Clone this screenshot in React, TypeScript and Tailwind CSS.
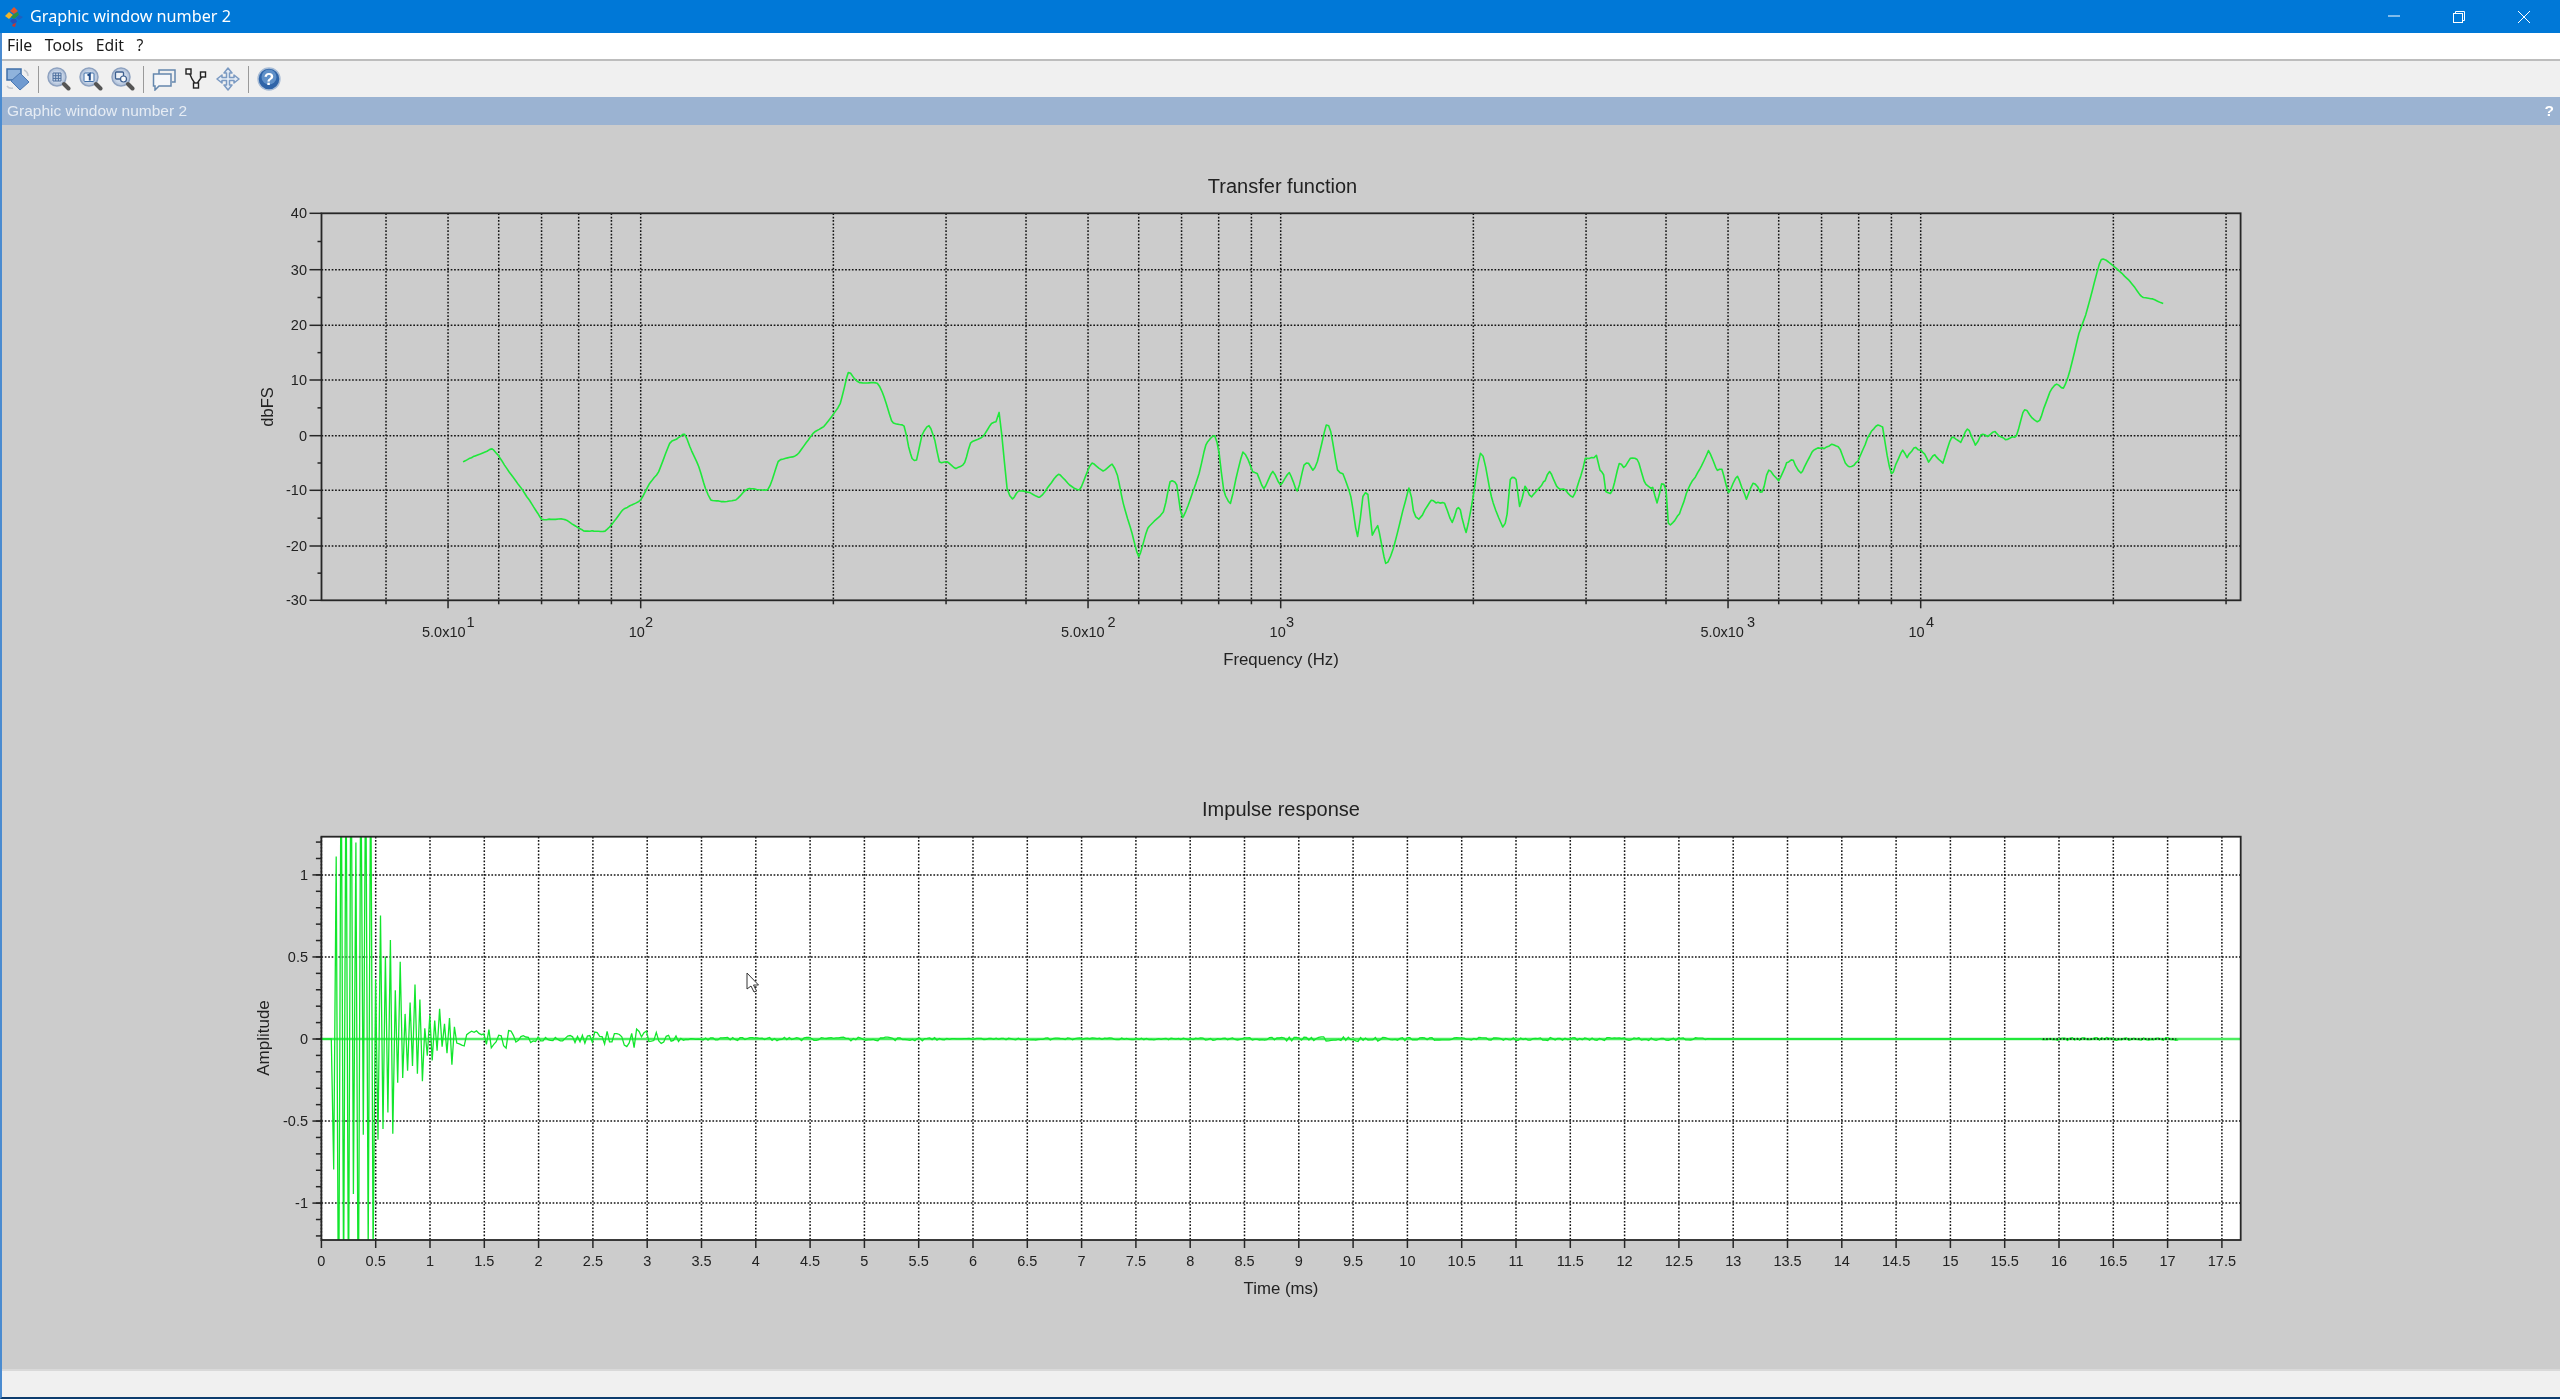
import React from "react";

const logX = (f: number) => 640.7 + 640 * (Math.log10(f) - 2);
const timeX = (t: number) => 321.4 + 108.6 * t;

const PLOT1 = { left: 321.5, right: 2240.6, top: 213.3, bottom: 600.3 };
const PLOT2 = { left: 321.4, right: 2240.7, top: 836.7, bottom: 1240 };

const dbTicks = [
  { label: "40", y: 213.3 },
  { label: "30", y: 269.7 },
  { label: "20", y: 325.3 },
  { label: "10", y: 380 },
  { label: "0", y: 435.7 },
  { label: "-10", y: 490.3 },
  { label: "-20", y: 546 },
  { label: "-30", y: 600.3 },
];

const freqGrid: number[] = [];
for (let dec = 10; dec <= 10000; dec *= 10) {
  for (let m = 1; m <= 9; m++) {
    const f = dec * m;
    if (f >= 40 && f <= 30000) freqGrid.push(f);
  }
}
const longFreq = [50, 100, 500, 1000, 5000, 10000];

const freqLabels = [
  { base: "5.0x10", exp: "1", x: 422, ex: 466.5 },
  { base: "10", exp: "2", x: 628.7, ex: 645 },
  { base: "5.0x10", exp: "2", x: 1061, ex: 1107.6 },
  { base: "10", exp: "3", x: 1269.6, ex: 1286 },
  { base: "5.0x10", exp: "3", x: 1700.4, ex: 1747 },
  { base: "10", exp: "4", x: 1908.5, ex: 1926 },
];

// traced from the reference, x/y as read on three crops of the plot
const seg1 = [522,906,545,890,570,877,587,867,600,885,625,935,655,990,680,1040,698,1077,715,1078,750,1078,770,1095,792,1112,815,1113,840,1113,860,1085,880,1050,900,1035,920,1020,940,970,960,935,985,850,1000,838,1018,822,1030,860,1050,920,1065,985,1077,1020,1090,1022,1105,1025,1133,1020,1160,986,1205,988,1228,905,1245,895,1270,885,1295,840,1310,815,1330,800,1350,765,1367,730,1385,637,1395,650,1410,668,1450,670,1465,710,1482,782,1495,793,1510,798,1520,860,1528,895,1538,900,1550,825];
const seg2 = [65,797,78,840,88,905,105,905,125,925,145,908,158,850,185,830,205,790,215,785,222,757,228,825,240,985,252,1017,265,993,290,998,313,1012,330,985,355,943,380,975,402,990,415,950,430,910,455,933,475,913,487,945,500,1030,520,1120,535,1190,555,1105,590,1055,605,965,620,975,633,1073,670,940,685,855,705,827,715,880,725,990,740,1030,752,960,768,877,780,900,790,935,800,940,815,985,835,935,852,975,872,938,890,993,905,915,915,910,925,930,935,905,955,795,965,815,980,930,992,942,1010,1010,1025,1130,1037,1010,1048,1003,1058,1125,1070,1097,1088,1210,1105,1165,1140,987,1150,1050,1162,1080,1190,1020,1205,1030,1220,1032,1237,1090,1247,1045,1255,1050,1268,1115,1285,1000,1300,877,1312,920,1325,1010,1350,1100,1360,1060,1367,960,1380,960,1388,1042,1400,978,1415,1010,1445,960,1455,935,1475,985,1490,990,1507,1012,1525,950,1535,898,1548,895,1560,888];
const seg3 = [105,890,112,930,120,945,125,995,140,993,155,908,165,922,180,895,195,897,215,975,230,985,240,1028,250,970,260,990,265,1088,275,1090,290,1060,310,985,335,930,355,875,375,930,385,930,400,995,420,948,440,1015,455,968,475,997,490,930,512,960,530,910,545,903,562,937,590,870,610,865,635,852,650,870,667,920,690,902,715,825,730,797,745,800,752,860,765,940,790,870,800,890,815,865,835,875,848,905,862,885,880,908,900,830,920,848,935,805,953,853,965,825,980,828,997,817,1020,837,1045,825,1063,748,1080,775,1097,780,1120,695,1135,672,1150,685,1165,630,1185,520,1200,465,1215,390,1235,298,1262,318,1300,365,1325,410,1350,417,1377,433];

function makeRandom(start: number) {
  let seed = start;
  return () => {
    seed = (seed * 16807) % 2147483647;
    return seed / 2147483647;
  };
}

function toPage(pts: number[], ox: number) {
  const out: number[][] = [];
  for (let i = 0; i < pts.length; i += 2) out.push([ox + pts[i] / 2.24, 160 + pts[i + 1] / 3]);
  return out;
}

// rounds the traced points off and adds the fine ripple of the measured curve
function buildTransfer() {
  const pts = [...toPage(seg1, 230), ...toPage(seg2, 900), ...toPage(seg3, 1550)];
  const rnd = makeRandom(11);
  const out: string[] = [];
  for (let i = 0; i < pts.length - 1; i++) {
    const p0 = pts[Math.max(i - 1, 0)];
    const p1 = pts[i];
    const p2 = pts[i + 1];
    const p3 = pts[Math.min(i + 2, pts.length - 1)];
    const n = Math.max(1, Math.round((p2[0] - p1[0]) / 2.2));
    for (let k = 0; k < n; k++) {
      const u = k / n;
      const tension = 0.3;
      const h = (a: number, b: number, c: number, d: number) => {
        const m1 = (c - a) * tension;
        const m2 = (d - b) * tension;
        return (2 * u ** 3 - 3 * u ** 2 + 1) * b + (u ** 3 - 2 * u ** 2 + u) * m1 + (-2 * u ** 3 + 3 * u ** 2) * c + (u ** 3 - u ** 2) * m2;
      };
      const x = h(p0[0], p1[0], p2[0], p3[0]);
      const ripple = x > 1400 && x < 2050 ? (rnd() - 0.5) * 2.2 : (rnd() - 0.5) * 0.5;
      out.push(`${x.toFixed(1)},${(h(p0[1], p1[1], p2[1], p3[1]) + ripple).toFixed(1)}`);
    }
  }
  return out.join(" ");
}
const transferCurve = buildTransfer();

// envelope of the impulse response, [ms, amplitude]
const envelope = [
  [0, 0], [0.1, 0], [0.105, 0.7], [0.13, 2.4], [0.42, 2.4], [0.5, 1.2], [0.55, 0.75], [0.72, 0.55], [0.85, 0.36],
  [1.0, 0.22], [1.2, 0.17], [1.25, 0.07], [1.7, 0.06], [2.0, 0.012], [2.2, 0.012], [2.4, 0.035], [2.9, 0.065],
  [3.3, 0.015], [3.4, 0.003], [3.6, 0.009], [4.6, 0.012], [5.6, 0.012], [5.8, 0.002], [6.3, 0.007], [7.2, 0.007],
  [7.6, 0.005], [8.4, 0.008], [9.4, 0.016], [10.2, 0.009], [11, 0.01], [12.7, 0.008], [12.8, 0], [15.8, 0],
  [15.9, 0.008], [17.1, 0.009], [17.11, 0],
];

function envAt(t: number) {
  for (let i = 1; i < envelope.length; i++) {
    const [t0, a0] = envelope[i - 1];
    const [t1, a1] = envelope[i];
    if (t <= t1) return a0 + ((a1 - a0) * (t - t0)) / (t1 - t0);
  }
  return 0;
}

function buildImpulse() {
  const rnd = makeRandom(7);
  const out: string[] = [];
  const step = 1 / 44.1;
  for (let i = 0; i * step < 17.11; i++) {
    const t = i * step;
    // alternating at the start, the tail is more like noise
    const sign = t < 1.25 ? (i % 2 === 0 ? 1 : -1) : rnd() > 0.5 ? 1 : -1;
    const r = rnd();
    const a = envAt(t) * (0.2 + 0.8 * r) * sign;
    out.push(`${timeX(t).toFixed(1)},${(1039 - a * 164).toFixed(1)}`);
  }
  return out.join(" ");
}
const impulseCurve = buildImpulse();

const ampMajor = [
  { label: "1", v: 1 },
  { label: "0.5", v: 0.5 },
  { label: "0", v: 0 },
  { label: "-0.5", v: -0.5 },
  { label: "-1", v: -1 },
];
const ampMinor: number[] = [];
for (let i = -12; i <= 12; i++) ampMinor.push(i / 10);
const ampY = (v: number) => 1039 - v * 164.1;

const timeTicks: number[] = [];
for (let i = 0; i <= 35; i++) timeTicks.push(i / 2);

const GRID = "#141414";
const AXIS = "#262626";

function Dots({ x1, y1, x2, y2 }: { x1: number; y1: number; x2: number; y2: number }) {
  return <line x1={x1} y1={y1} x2={x2} y2={y2} stroke={GRID} strokeWidth={1.5} strokeDasharray="1.7 1.7" />;
}

function TransferPlot() {
  const p = PLOT1;
  return (
    <svg viewBox="0 125 2560 575" className="block w-full h-[575px] font-['Liberation_Sans',Arial,sans-serif]" fill="#222">
      <text x={1282.5} y={193} fontSize={20} textAnchor="middle">Transfer function</text>
      {dbTicks.slice(1, -1).map((t) => (
        <Dots key={t.label} x1={p.left} y1={t.y} x2={p.right} y2={t.y} />
      ))}
      {freqGrid.map((f) => (
        <Dots key={f} x1={logX(f)} y1={p.top} x2={logX(f)} y2={p.bottom} />
      ))}
      <polyline points={transferCurve} fill="none" stroke="#1fe83a" strokeWidth={1.6} strokeLinejoin="round" />
      <rect x={p.left} y={p.top} width={p.right - p.left} height={p.bottom - p.top} fill="none" stroke={AXIS} strokeWidth={1.8} />
      {dbTicks.map((t) => (
        <g key={t.label}>
          <line x1={p.left - 12} y1={t.y} x2={p.left} y2={t.y} stroke={AXIS} strokeWidth={1.5} />
          <text x={307} y={t.y + 5} fontSize={14.5} textAnchor="end">{t.label}</text>
        </g>
      ))}
      {dbTicks.slice(0, -1).map((t, i) => {
        const y = (t.y + dbTicks[i + 1].y) / 2;
        return <line key={t.label} x1={p.left - 4} y1={y} x2={p.left} y2={y} stroke={AXIS} strokeWidth={1.5} />;
      })}
      {freqGrid.map((f) => (
        <line key={f} x1={logX(f)} y1={p.bottom} x2={logX(f)} y2={p.bottom + (longFreq.includes(f) ? 8 : 4)} stroke={AXIS} strokeWidth={1.5} />
      ))}
      {freqLabels.map((l) => (
        <g key={l.base + l.exp}>
          <text x={l.x} y={636.7} fontSize={14.5}>{l.base}</text>
          <text x={l.ex} y={626.7} fontSize={14.5}>{l.exp}</text>
        </g>
      ))}
      <text x={1281} y={665} fontSize={16.8} textAnchor="middle">Frequency (Hz)</text>
      <text transform="translate(272.5 407) rotate(-90)" fontSize={16.5} textAnchor="middle">dbFS</text>
    </svg>
  );
}

function ImpulsePlot() {
  const p = PLOT2;
  return (
    <svg viewBox="0 700 2560 669" className="block w-full h-[669px] font-['Liberation_Sans',Arial,sans-serif]" fill="#222">
      <defs>
        <clipPath id="impulse-clip">
          <rect x={p.left} y={p.top} width={p.right - p.left} height={p.bottom - p.top} />
        </clipPath>
      </defs>
      <text x={1281} y={816} fontSize={20} textAnchor="middle">Impulse response</text>
      <rect x={p.left} y={p.top} width={p.right - p.left} height={p.bottom - p.top} fill="#ffffff" />
      {ampMajor.map((t) => (
        <Dots key={t.label} x1={p.left} y1={ampY(t.v)} x2={p.right} y2={ampY(t.v)} />
      ))}
      {timeTicks.map((t) => (
        <Dots key={t} x1={timeX(t)} y1={p.top} x2={timeX(t)} y2={p.bottom} />
      ))}
      <line x1={p.left} y1={1039} x2={p.right} y2={1039} stroke="#4cee60" strokeWidth={2.4} />
      <polyline points={impulseCurve} fill="none" stroke="#12e62c" strokeWidth={1.3} clipPath="url(#impulse-clip)" />
      <Dots x1={timeX(15.85)} y1={1039} x2={timeX(17.08)} y2={1039} />
      <rect x={p.left} y={p.top} width={p.right - p.left} height={p.bottom - p.top} fill="none" stroke={AXIS} strokeWidth={1.8} />
      {ampMinor.map((v) => (
        <line key={v} x1={p.left - 5.5} y1={ampY(v)} x2={p.left} y2={ampY(v)} stroke={AXIS} strokeWidth={1.5} />
      ))}
      {ampMajor.map((t) => (
        <g key={t.label}>
          <line x1={p.left - 9} y1={ampY(t.v)} x2={p.left} y2={ampY(t.v)} stroke={AXIS} strokeWidth={1.5} />
          <text x={308} y={ampY(t.v) + 5} fontSize={14.5} textAnchor="end">{t.label}</text>
        </g>
      ))}
      {timeTicks.map((t) => (
        <g key={t}>
          <line x1={timeX(t)} y1={p.bottom} x2={timeX(t)} y2={p.bottom + 8} stroke={AXIS} strokeWidth={1.5} />
          <text x={timeX(t)} y={1266} fontSize={14.5} textAnchor="middle">{t}</text>
        </g>
      ))}
      <text x={1281} y={1294} fontSize={16.8} textAnchor="middle">Time (ms)</text>
      <text transform="translate(269 1038) rotate(-90)" fontSize={17} textAnchor="middle">Amplitude</text>
      <path d="M747 973 L747 989 L751 986 L754 992 L756.5 991 L753.5 985 L758.5 985 Z" fill="#fff" stroke="#333" strokeWidth={1} />
    </svg>
  );
}

function Logo() {
  return (
    <svg width="18" height="22" viewBox="0 0 18 22">
      <path d="M9 1 L13 5 L9 8 L5 5 Z" fill="#e2572b" />
      <path d="M4 6 L8 9 L4 13 L0 10 Z" fill="#f0b429" />
      <path d="M9 8 L13 6 L14 9 L9 13 L6 11 Z" fill="#2f8f3f" />
      <path d="M14 9 L18 11 L14 14 L11 12 Z" fill="#1f5fbf" />
      <path d="M7 13 L11 13 L12 16 L8 18 L5 15 Z" fill="#2450b8" />
      <path d="M8 18 L11 17 L10 21 L7 20 Z" fill="#c7352f" />
    </svg>
  );
}

function Zoomer({ children }: { children: React.ReactNode }) {
  return (
    <svg width="24" height="24" viewBox="0 0 24 24">
      <circle cx="10" cy="10" r="9" fill="#b9c8de" stroke="#8ea2c0" strokeWidth="1.5" />
      <circle cx="10" cy="10" r="6.5" fill="#c9d6e8" />
      <line x1="17" y1="17" x2="21.5" y2="21.5" stroke="#555" strokeWidth="4" strokeLinecap="round" />
      {children}
    </svg>
  );
}

function Separator() {
  return <div className="w-px h-[27px] bg-[#9a9a9a]" />;
}

function Toolbar() {
  return (
    <div className="flex items-center gap-2 h-[36px] pl-[4px] bg-[#f0f0f0]">
      <svg width="24" height="24" viewBox="0 0 24 24">
        <path d="M1 2 H15 V13 H1 Z" fill="#8fb3dc" stroke="#3f6fa8" strokeWidth="1.5" />
        <path d="M1 19 Q3 22 7 21" fill="none" stroke="#c3c8cf" strokeWidth="1.5" />
        <path d="M18 3 Q22 5 22 9" fill="none" stroke="#c3c8cf" strokeWidth="1.5" />
        <path d="M14 6 L23 15 L14 23 L5 14 Z" fill="#6f9ad0" stroke="#4b78b2" strokeWidth="1" />
      </svg>
      <Separator />
      <Zoomer>
        <path d="M6 6 H14 V14 H6 Z M6 8.7 H14 M6 11.4 H14 M8.7 6 V14 M11.4 6 V14" fill="none" stroke="#4d6f9e" strokeWidth="1" />
      </Zoomer>
      <Zoomer>
        <rect x="5" y="6" width="10" height="8.5" rx="1" fill="#f5f8fc" stroke="#3f6fa8" strokeWidth="1" />
        <path d="M8.5 8.5 L10.8 7 V13.5" fill="none" stroke="#27508a" strokeWidth="2" />
      </Zoomer>
      <Zoomer>
        <rect x="4.5" y="5" width="8" height="7" rx="1" fill="#eef2f8" stroke="#3d5f8f" strokeWidth="1.3" />
        <circle cx="12.5" cy="12" r="3" fill="#f8fafc" stroke="#3d5f8f" strokeWidth="1.2" />
      </Zoomer>
      <Separator />
      <svg width="24" height="24" viewBox="0 0 24 24" fill="none" stroke="#6487ad" strokeWidth="1.5">
        <path d="M7 7 V3 H23 V15 H20" />
        <path d="M2.5 7 H19 V19 H7 L3 23 V19 H1.5 V7 Z" fill="#f4f6f9" />
      </svg>
      <svg width="24" height="24" viewBox="0 0 24 24" fill="none" stroke="#222" strokeWidth="1.4">
        <path d="M5 5 L8 12 L12 18 L19 8" />
        <rect x="2" y="2" width="5" height="5" fill="#f6f6f6" />
        <rect x="9.5" y="16" width="5" height="5" fill="#f6f6f6" />
        <rect x="16.5" y="5" width="5" height="5" fill="#f6f6f6" />
      </svg>
      <svg width="24" height="24" viewBox="0 0 24 24" fill="#e3ebf5" stroke="#7b9ac2" strokeWidth="1.5" strokeLinejoin="round">
        <path d="M12 1 L16 6 H13.5 V10.5 H18 V8 L23 12 L18 16 V13.5 H13.5 V18 H16 L12 23 L8 18 H10.5 V13.5 H6 V16 L1 12 L6 8 V10.5 H10.5 V6 H8 Z" />
      </svg>
      <Separator />
      <svg width="24" height="24" viewBox="0 0 24 24">
        <circle cx="12" cy="12" r="11" fill="#2f64a8" stroke="#a9bdd6" strokeWidth="1.4" />
        <circle cx="12" cy="10" r="7.5" fill="#5f90c8" />
        <text x="12" y="18" fontSize="17" fontWeight="700" fill="#fff" textAnchor="middle" className="font-['Liberation_Sans',sans-serif]">?</text>
      </svg>
    </div>
  );
}

export default function App() {
  return (
    <div className="h-[1399px] w-[2560px] flex flex-col overflow-hidden bg-[#cccccc] blur-[0.4px] font-['Noto_Sans',sans-serif]">
      <div className="h-[33px] shrink-0 flex items-center bg-[#0078d7] text-white">
        <div className="w-[30px] pl-[5px] flex items-center"><Logo /></div>
        <span className="text-[16.2px] leading-none">Graphic window number 2</span>
        <div className="ml-auto flex items-center">
          <div className="w-[65px] flex justify-center">
            <svg width="14" height="14" viewBox="0 0 14 14" stroke="#fff" fill="none"><line x1="1" y1="6" x2="13" y2="6" /></svg>
          </div>
          <div className="w-[65px] flex justify-center">
            <svg width="14" height="14" viewBox="0 0 14 14" stroke="#fff" fill="none">
              <rect x="1.5" y="3.5" width="9" height="9" />
              <path d="M3.5 3.5 V1.5 H12.5 V10.5 H10.5" />
            </svg>
          </div>
          <div className="w-[65px] flex justify-center mr-[4px]">
            <svg width="14" height="14" viewBox="0 0 14 14" stroke="#fff" fill="none"><path d="M1 1 L13 13 M13 1 L1 13" /></svg>
          </div>
        </div>
      </div>
      <div className="flex-1 flex flex-col min-h-0 border-l-2 border-b-2 border-l-[#4a8bd0] border-b-[#0d3c6e]">
        <div className="h-[28px] shrink-0 flex items-center gap-[12.5px] pl-[5px] bg-white border-b-2 border-[#bdbdbd] text-[15.8px] text-[#1a1a1a]">
          <span>File</span>
          <span>Tools</span>
          <span>Edit</span>
          <span>?</span>
        </div>
        <Toolbar />
        <div className="h-[28px] shrink-0 flex items-center justify-between pl-[5px] pr-[6px] bg-[#9bb3d2] text-[15.5px] text-[#e6ecf4] font-['Liberation_Sans',sans-serif]">
          <span>Graphic window number 2</span>
          <span className="font-bold text-white">?</span>
        </div>
        <div className="flex-1 min-h-0 -ml-[2px]">
          <TransferPlot />
          <ImpulsePlot />
        </div>
        <div className="h-[28px] shrink-0 bg-[#f0f0f0] border-t-2 border-[#d9d9d9]" />
      </div>
    </div>
  );
}
